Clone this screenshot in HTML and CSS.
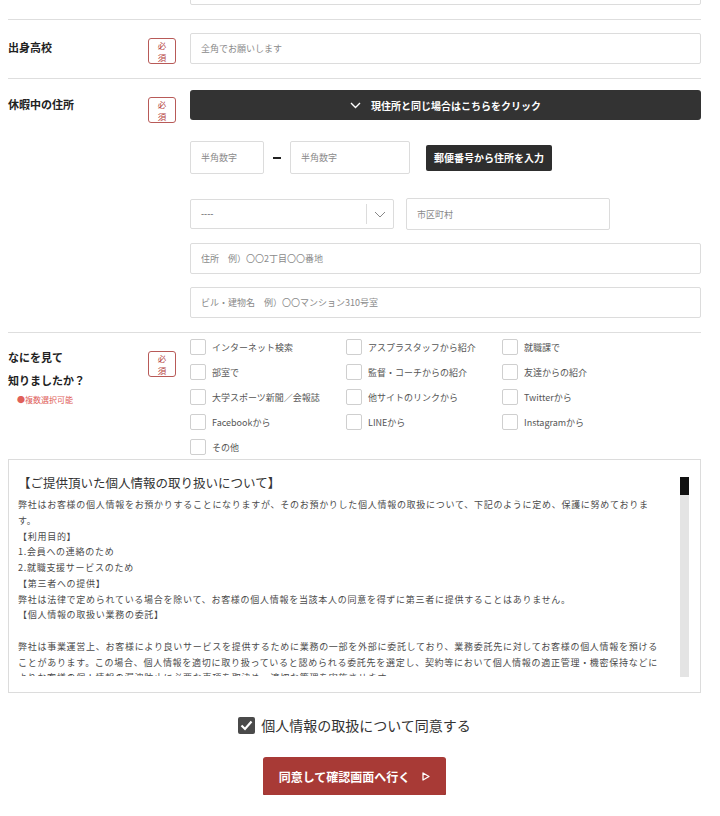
FILE: index.html
```html
<!DOCTYPE html>
<html lang="ja">
<head>
  <meta charset="UTF-8" />
  <meta name="viewport" content="width=device-width, initial-scale=1.0"/>
  <title>エントリーフォーム</title>
  <link rel="stylesheet" href="styles.css">
</head>
<body>
  <form class="form">
    <div class="row row-cut">
      <div class="label"></div>
      <div></div>
      <div class="field"><input type="text" class="text"></div>
    </div>

    <div class="row">
      <div class="label">出身高校</div>
      <div><span class="must">必<br>須</span></div>
      <div class="field"><input type="text" class="text" placeholder="全角でお願いします"></div>
    </div>

    <div class="row row-address">
      <div class="label">休暇中の住所</div>
      <div><span class="must">必<br>須</span></div>
      <div class="field">
        <button type="button" class="copy-btn">
          <svg width="11" height="7" viewBox="0 0 11 7"><path d="M1 1l4.5 4.5L10 1" fill="none" stroke="#fff" stroke-width="1.4"/></svg>
          現住所と同じ場合はこちらをクリック
        </button>

        <div class="zip">
          <input type="text" class="text zip1" placeholder="半角数字">
          <span class="dash"></span>
          <input type="text" class="text zip2" placeholder="半角数字">
          <button type="button" class="zip-btn">郵便番号から住所を入力</button>
        </div>

        <div class="pref">
          <div class="select">
            <span class="select-value">----</span>
            <span class="select-arrow">
              <svg width="12" height="7" viewBox="0 0 12 7"><path d="M1 1l5 5 5-5" fill="none" stroke="#888" stroke-width="1"/></svg>
            </span>
          </div>
          <input type="text" class="text city" placeholder="市区町村">
        </div>

        <input type="text" class="text addr" placeholder="住所　例）〇〇2丁目〇〇番地">
        <input type="text" class="text bldg" placeholder="ビル・建物名　例）〇〇マンション310号室">
      </div>
    </div>

    <div class="row row-check">
      <div class="label label-multi">
        なにを見て<br>知りましたか？
        <p class="note">●複数選択可能</p>
      </div>
      <div><span class="must must-low">必<br>須</span></div>
      <div class="options">
        <label class="opt"><input type="checkbox"> インターネット検索</label>
        <label class="opt"><input type="checkbox"> アスプラスタッフから紹介</label>
        <label class="opt"><input type="checkbox"> 就職課で</label>
        <label class="opt"><input type="checkbox"> 部室で</label>
        <label class="opt"><input type="checkbox"> 監督・コーチからの紹介</label>
        <label class="opt"><input type="checkbox"> 友達からの紹介</label>
        <label class="opt"><input type="checkbox"> 大学スポーツ新聞／会報誌</label>
        <label class="opt"><input type="checkbox"> 他サイトのリンクから</label>
        <label class="opt"><input type="checkbox"> Twitterから</label>
        <label class="opt"><input type="checkbox"> Facebookから</label>
        <label class="opt"><input type="checkbox"> LINEから</label>
        <label class="opt"><input type="checkbox"> Instagramから</label>
        <label class="opt"><input type="checkbox"> その他</label>
      </div>
    </div>

    <div class="policy">
      <div class="policy-text">
        <h2>【ご提供頂いた個人情報の取り扱いについて】</h2>
        <p>弊社はお客様の個人情報をお預かりすることになりますが、そのお預かりした個人情報の取扱について、下記のように定め、保護に努めております。</p>
        <p>【利用目的】</p>
        <p>1.会員への連絡のため</p>
        <p>2.就職支援サービスのため</p>
        <p>【第三者への提供】</p>
        <p>弊社は法律で定められている場合を除いて、お客様の個人情報を当該本人の同意を得ずに第三者に提供することはありません。</p>
        <p>【個人情報の取扱い業務の委託】</p>
        <p><br></p>
        <p>弊社は事業運営上、お客様により良いサービスを提供するために業務の一部を外部に委託しており、業務委託先に対してお客様の個人情報を預けることがあります。この場合、個人情報を適切に取り扱っていると認められる委託先を選定し、契約等において個人情報の適正管理・機密保持などによりお客様の個人情報の漏洩防止に必要な事項を取決め、適切な管理を実施させます。</p>
      </div>
      <div class="scrollbar"><div class="thumb"></div></div>
    </div>

    <label class="agree">
      <span class="agree-box">
        <svg width="13" height="11" viewBox="0 0 13 11"><path d="M1.5 5.5l3.5 3.5 6.5-7.5" fill="none" stroke="#fff" stroke-width="2.2"/></svg>
      </span>
      個人情報の取扱について同意する
    </label>

    <button type="submit" class="submit">
      同意して確認画面へ行く
      <svg width="8" height="9" viewBox="0 0 8 9"><path d="M1 1l6 3.5-6 3.5z" fill="none" stroke="#fff" stroke-width="1.3" stroke-linejoin="round"/></svg>
    </button>
  </form>
</body>
</html>
```

FILE: styles.css
```css
body {
  margin: 0;
  background: #fff;
  color: #222;
  font-family: "Noto Sans CJK JP", "Noto Sans", sans-serif;
  overflow: hidden;
}

.form {
  width: 693px;
  margin: -40px 0 0 8px;
}

.row {
  display: grid;
  grid-template-columns: 140px 42px 511px;
  padding: 13px 0 14px;
  border-bottom: 1px solid #dedede;
}

.row-cut {
  padding-top: 14px;
}

.row-address {
  padding-top: 11px;
}

.row-check {
  padding: 6px 0 4px;
  border-bottom: none;
}

.label {
  font-size: 11px;
  font-weight: bold;
  line-height: 22px;
  padding-top: 3px;
}

.label-multi {
  line-height: 23px;
  padding-top: 7px;
}

.note {
  margin: 0;
  padding-left: 9px;
  font-size: 8px;
  font-weight: normal;
  line-height: 16px;
  color: #e0605a;
}

.must {
  display: flex;
  align-items: center;
  justify-content: center;
  width: 26px;
  height: 24px;
  margin-top: 5px;
  border: 1px solid #b85a58;
  border-radius: 3px;
  font-size: 8.5px;
  line-height: 12px;
  color: #b33e3c;
  text-align: center;
}

.row-address .must {
  margin-top: 7px;
}

.must-low {
  margin-top: 12px !important;
}

.field {
  display: flex;
  flex-direction: column;
  align-items: flex-start;
}

.text {
  box-sizing: border-box;
  height: 31px;
  width: 511px;
  padding: 0 10px;
  border: 1px solid #dcdcdc;
  border-radius: 2px;
  font-family: inherit;
  font-size: 9px;
  color: #333;
  outline: none;
}

.text::placeholder {
  color: #8a8a8a;
}

.copy-btn {
  display: flex;
  align-items: center;
  justify-content: center;
  gap: 10px;
  width: 511px;
  height: 30px;
  border: none;
  border-radius: 3px;
  background: #333;
  color: #fff;
  font-family: inherit;
  font-size: 10px;
  font-weight: bold;
}

.zip {
  display: flex;
  align-items: center;
  margin-top: 21px;
}

.zip .text {
  height: 33px;
}

.zip1 {
  width: 74px !important;
}

.zip2 {
  width: 120px !important;
}

.dash {
  width: 26px;
  display: flex;
  justify-content: center;
}

.dash::before {
  content: "";
  width: 8px;
  height: 2px;
  background: #222;
}

.zip-btn {
  margin-left: 16px;
  width: 126px;
  height: 26px;
  border: none;
  border-radius: 2px;
  background: #2e2e2e;
  color: #fff;
  font-family: inherit;
  font-size: 10px;
  font-weight: bold;
  padding: 0;
}

.pref {
  display: flex;
  align-items: center;
  gap: 12px;
  margin-top: 24px;
}

.select {
  box-sizing: border-box;
  display: flex;
  width: 204px;
  height: 30px;
  border: 1px solid #dcdcdc;
  border-radius: 2px;
}

.select-value {
  flex: 1;
  padding-left: 10px;
  font-size: 9px;
  line-height: 28px;
  color: #555;
}

.select-arrow {
  display: flex;
  align-items: center;
  justify-content: center;
  width: 26px;
  margin: 4px 0;
  border-left: 1px solid #dcdcdc;
}

.city {
  width: 204px;
  height: 32px;
}

.addr {
  margin-top: 13px;
}

.bldg {
  margin-top: 13px;
}

.options {
  display: grid;
  grid-template-columns: repeat(3, 156px);
  grid-auto-rows: 16px;
  row-gap: 9px;
}

.opt {
  display: flex;
  align-items: center;
  gap: 6px;
  font-size: 9px;
  color: #555;
}

.opt input {
  appearance: none;
  box-sizing: border-box;
  width: 16px;
  height: 16px;
  margin: 0;
  border: 1px solid #cfcfcf;
  border-radius: 2px;
  background: #fff;
}

.policy {
  display: flex;
  padding: 14px 11px 15px 9px;
  border: 1px solid #dcdcdc;
}

.policy-text {
  width: 645px;
  height: 202px;
  overflow: hidden;
  margin-right: 18px;
}

.policy-text h2 {
  margin: 0 0 5px;
  font-size: 12.5px;
  font-weight: normal;
  line-height: 18px;
  color: #333;
}

.policy-text p {
  margin: 0;
  font-size: 9px;
  line-height: 15.75px;
  letter-spacing: 0.72px;
  color: #4a4a4a;
}

.scrollbar {
  width: 9px;
  height: 200px;
  margin-top: 3px;
  background: #e4e4e4;
}

.thumb {
  height: 18px;
  background: #111;
}

.agree {
  display: flex;
  align-items: center;
  justify-content: center;
  gap: 6px;
  margin-top: 22px;
  font-size: 14px;
  color: #333;
}

.agree-box {
  display: flex;
  align-items: center;
  justify-content: center;
  width: 17px;
  height: 17px;
  border-radius: 2px;
  background: #4a4a4a;
}

.submit {
  display: flex;
  align-items: center;
  justify-content: center;
  gap: 12px;
  width: 183px;
  height: 38px;
  margin: 22px auto 0;
  border: none;
  border-radius: 3px;
  background: #a83a36;
  box-shadow: 0 1px 0 #7d2522;
  color: #fff;
  font-family: inherit;
  font-size: 12px;
  font-weight: bold;
}
```
